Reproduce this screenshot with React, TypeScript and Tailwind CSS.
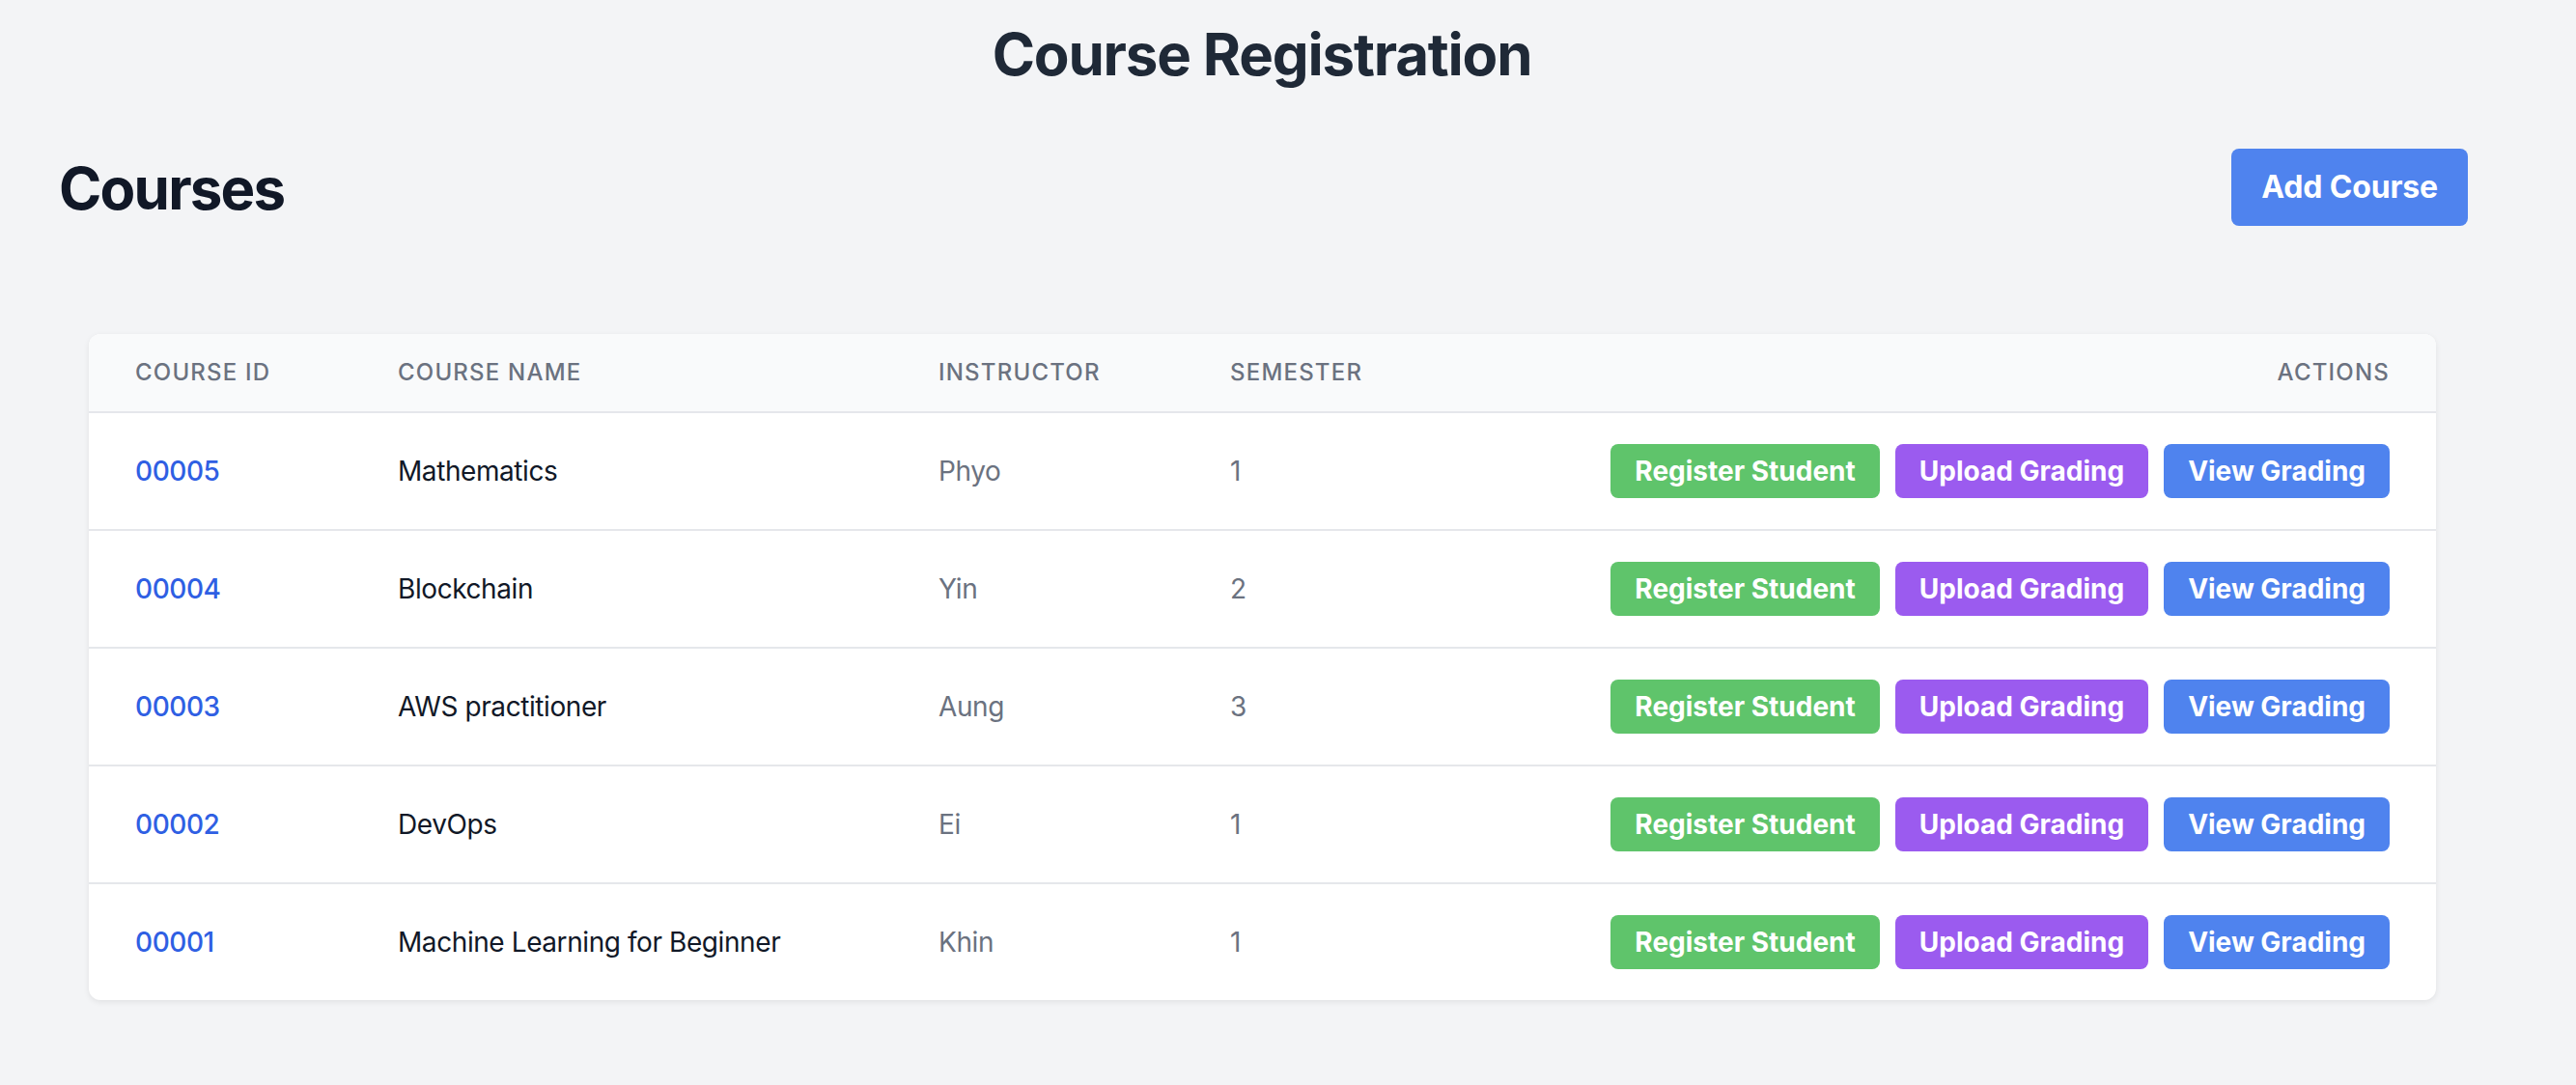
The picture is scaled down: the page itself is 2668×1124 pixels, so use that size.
import React from 'react';

const COURSES = [
  { id: '00005', name: 'Mathematics', instructor: 'Phyo', semester: 1 },
  { id: '00004', name: 'Blockchain', instructor: 'Yin', semester: 2 },
  { id: '00003', name: 'AWS practitioner', instructor: 'Aung', semester: 3 },
  { id: '00002', name: 'DevOps', instructor: 'Ei', semester: 1 },
  { id: '00001', name: 'Machine Learning for Beginner', instructor: 'Khin', semester: 1 },
];

const btn = 'whitespace-nowrap px-[25px] py-[8px] text-[28px] leading-[40px] font-bold text-white rounded-[8px]';

export default function App() {
  return (
    <div className="min-h-screen bg-[#f3f4f6] font-['Inter','Noto_Sans',sans-serif]">
      <h1 className="pt-[20px] pr-[54px] text-center text-[60px] leading-[72px] font-bold tracking-[-0.02em] text-[#1f2937]">
        Course Registration
      </h1>

      <div className="mt-[59px] flex items-start justify-between pl-[61px] pr-[112px]">
        <h2 className="mt-[8px] text-[60px] leading-[72px] font-bold tracking-[-0.03em] text-[#111827]">Courses</h2>
        <button
          type="button"
          className="mt-[3px] whitespace-nowrap px-[31px] py-[16px] text-[32px] leading-[48px] font-bold tracking-[-0.005em] text-white bg-[#4f83ee] rounded-[8px]"
        >
          Add Course
        </button>
      </div>

      <div className="mt-[112px] ml-[92px] mr-[145px] bg-white rounded-[12px] overflow-hidden shadow-[0_2px_6px_rgba(0,0,0,0.08)]">
        <table className="w-full table-fixed border-collapse">
          <colgroup>
            <col className="w-[272px]" />
            <col className="w-[560px]" />
            <col className="w-[302px]" />
            <col className="w-[444px]" />
            <col className="w-[853px]" />
          </colgroup>
          <thead className="bg-[#f9fafb] border-b-2 border-[#e5e7eb]">
            <tr className="text-[24px] leading-[32px] font-medium uppercase tracking-wider text-[#6b7280]">
              <th className="px-[48px] py-[24px] text-left font-medium">Course ID</th>
              <th className="px-[48px] py-[24px] text-left font-medium">Course Name</th>
              <th className="px-[48px] py-[24px] text-left font-medium">Instructor</th>
              <th className="px-[48px] py-[24px] text-left font-medium">Semester</th>
              <th className="px-[48px] py-[24px] text-right font-medium">Actions</th>
            </tr>
          </thead>
          <tbody className="divide-y-2 divide-[#e5e7eb]">
            {COURSES.map(c => (
              <tr key={c.id} className="text-[28px] leading-[40px]">
                <td className="px-[48px] py-[32px] font-medium tracking-[-0.015em] text-[#2f5fe3]">{c.id}</td>
                <td className="px-[48px] py-[32px] tracking-[-0.015em] text-[#111827]">{c.name}</td>
                <td className="px-[48px] py-[32px] tracking-[-0.015em] text-[#6b7280]">{c.instructor}</td>
                <td className="px-[48px] py-[32px] tracking-[-0.015em] text-[#6b7280]">{c.semester}</td>
                <td className="px-[48px] py-[32px]">
                  <div className="flex justify-end gap-[16px]">
                    <button type="button" className={`${btn} bg-[#5fc46b]`}>Register Student</button>
                    <button type="button" className={`${btn} bg-[#9b5bef]`}>Upload Grading</button>
                    <button type="button" className={`${btn} bg-[#4f83ee]`}>View Grading</button>
                  </div>
                </td>
              </tr>
            ))}
          </tbody>
        </table>
      </div>
    </div>
  );
}
